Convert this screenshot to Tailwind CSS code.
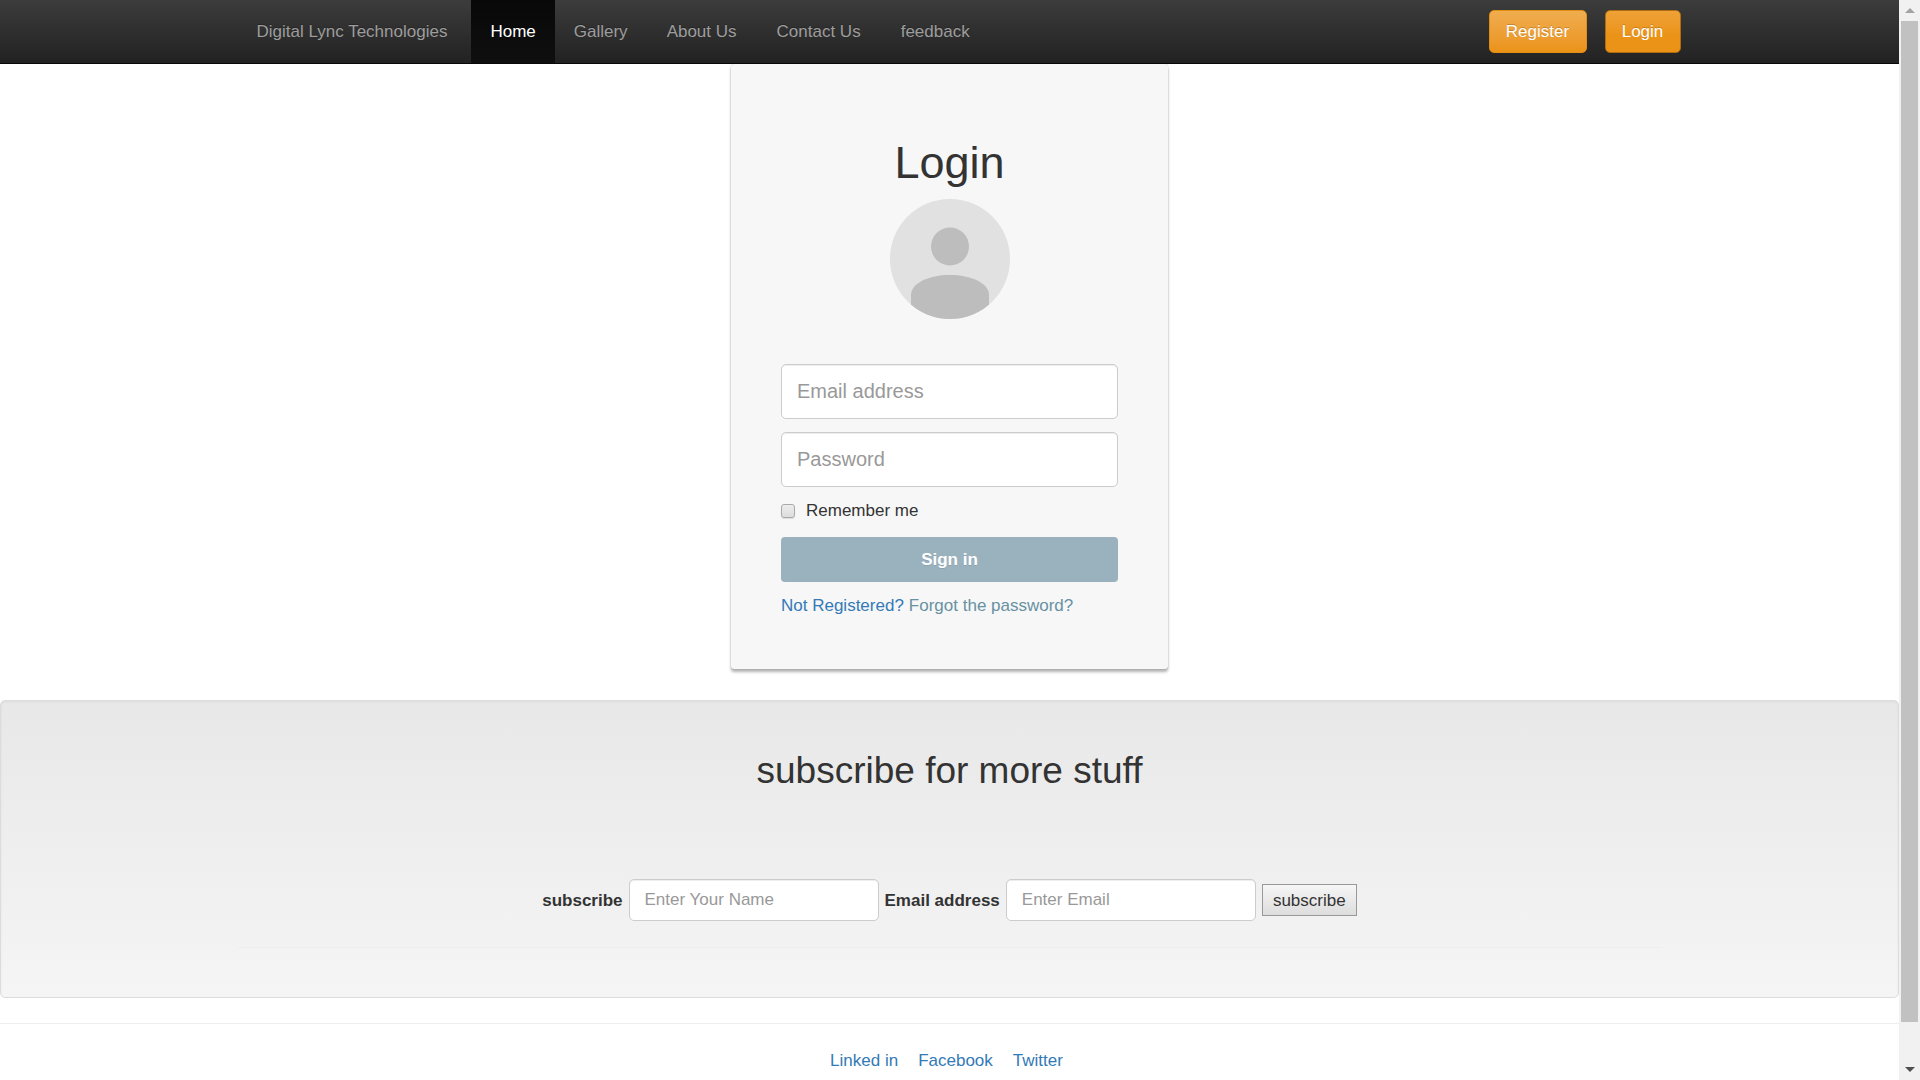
<!DOCTYPE html>
<html lang="en">
<head>
<meta charset="utf-8">
<meta name="viewport" content="width=device-width, initial-scale=1">
<title>Login - Digital Lync Technologies</title>
<script src="https://cdn.jsdelivr.net/npm/@tailwindcss/browser@4"></script>
</head>
<body class="flex min-h-screen bg-white font-['Liberation_Sans',Arial,sans-serif] text-[17px] leading-[25px] text-[#333333]">

  <div class="min-w-0 flex-1">
    <!-- Top navigation -->
    <header class="border-b border-[#080808] bg-linear-to-b from-[#3c3c3c] to-[#222222]">
      <nav class="mx-auto flex h-[63px] max-w-[1462px] items-center pl-[18px] text-[#9d9d9d] text-shadow-[0_-1px_0_rgb(0_0_0/0.25)]">
        <a href="#" class="pr-6 pl-5">Digital Lync Technologies</a>
        <a href="#" class="flex h-full items-center bg-linear-to-b from-[#080808] to-[#0f0f0f] px-[19px] text-white">Home</a>
        <a href="#" class="px-[19px]">Gallery</a>
        <a href="#" class="px-5">About Us</a>
        <a href="#" class="px-5">Contact Us</a>
        <a href="#" class="px-5">feedback</a>
        <div class="ml-auto flex gap-[18px] text-white">
          <button type="button" class="h-[43px] w-[98px] rounded-[5px] border border-[#e38d13] bg-linear-to-b from-[#f0ad4e] to-[#eb9316] text-shadow-[0_-1px_0_rgb(0_0_0/0.2)]">Register</button>
          <button type="button" class="h-[43px] w-[76px] rounded-[5px] border border-[#b06d0f] bg-linear-to-b from-[#eea236] to-[#eb9316] to-60% text-shadow-[0_-1px_0_rgb(0_0_0/0.2)]">Login</button>
        </div>
      </nav>
    </header>

    <main>
      <!-- Login card -->
      <section class="mx-auto flex w-full max-w-[437px] flex-col rounded-[3px] bg-[#f7f7f7] px-[50px] pt-[74px] pb-[51px] shadow-[0_3px_3px_rgb(0_0_0/0.3),0_0_1px_rgb(0_0_0/0.3)]">
        <h1 class="text-center text-[45px] leading-[50px]">Login</h1>
        <svg class="mx-auto mt-[11px] size-[120px]" viewBox="0 0 120 120" role="img" aria-label="Profile picture">
          <defs><clipPath id="disc"><circle cx="60" cy="60" r="60"/></clipPath></defs>
          <g clip-path="url(#disc)">
            <rect width="120" height="120" fill="#e1e1e1"/>
            <circle cx="60" cy="47.500" r="19" fill="#bdbdbd"/>
            <path d="M21 120V96C21 84 39 76 60 76S99 84 99 96V120Z" fill="#bdbdbd"/>
          </g>
        </svg>
        <form class="mt-[45px] flex flex-col">
          <input type="email" aria-label="Email address" placeholder="Email address" class="h-[55px] rounded-[5px] border border-[#cccccc] bg-white px-[15px] text-[20px] shadow-[inset_0_1px_1px_rgb(0_0_0/0.075)] placeholder:text-[#999999]">
          <input type="password" aria-label="Password" placeholder="Password" class="mt-[13px] h-[55px] rounded-[5px] border border-[#cccccc] bg-white px-[15px] text-[20px] shadow-[inset_0_1px_1px_rgb(0_0_0/0.075)] placeholder:text-[#999999]">
          <label class="mt-[11px] flex items-center gap-[11px]">
            <input type="checkbox" class="size-[14px] appearance-none rounded-[3px] border border-[#a9a9a9] bg-linear-to-b from-[#ededed] to-[#dcdcdc] shadow-[0_1px_1px_rgb(0_0_0/0.1)] checked:bg-[#428bca]">
            Remember me
          </label>
          <button type="submit" class="mt-[14px] h-[45px] rounded-[4px] bg-[#9ab2be] font-bold text-white text-shadow-[0_1px_rgb(0_0_0/0.1)]">Sign in</button>
        </form>
        <p class="mt-[11px] flex gap-[5px] whitespace-nowrap">
          <a href="#" class="text-[#337ab7]">Not Registered?</a>
          <a href="#" class="text-[#6891a2]">Forgot the password?</a>
        </p>
      </section>

      <!-- Newsletter -->
      <section class="mt-[31px] rounded-[5px] border border-[#dcdcdc] bg-linear-to-b from-[#e8e8e8] to-[#f5f5f5] px-[19px] pt-[49px] pb-[49px] shadow-[inset_0_1px_3px_rgb(0_0_0/0.05),0_1px_0_rgb(255_255_255/0.1)]">
        <div class="mx-auto max-w-[1424px]">
          <h2 class="text-center text-[37px] leading-[42px]">subscribe for more stuff</h2>
          <form class="mt-[87px] flex items-center justify-center gap-[6px]">
            <label for="name" class="font-bold">subscribe</label>
            <input id="name" type="text" placeholder="Enter Your Name" class="h-[42px] w-[250px] rounded-[5px] border border-[#cccccc] bg-white px-[15px] shadow-[inset_0_1px_1px_rgb(0_0_0/0.075)] placeholder:text-[#999999]">
            <label for="email" class="font-bold">Email address</label>
            <input id="email" type="email" placeholder="Enter Email" class="h-[42px] w-[250px] rounded-[5px] border border-[#cccccc] bg-white px-[15px] shadow-[inset_0_1px_1px_rgb(0_0_0/0.075)] placeholder:text-[#999999]">
            <button type="submit" class="h-[32px] w-[95px] border border-[#999999] bg-linear-to-b from-[#f6f6f6] to-[#dddddd]">subscribe</button>
          </form>
          <hr class="mt-[26px] border-[#eeeeee]">
        </div>
      </section>
    </main>

    <hr class="mt-[25px] border-[#eeeeee]">
    <footer class="flex justify-center gap-5 pt-6 pr-1.5 text-[#337ab7]">
      <a href="#">Linked in</a>
      <a href="#">Facebook</a>
      <a href="#">Twitter</a>
    </footer>
  </div>

  <!-- Scroll track -->
  <div class="sticky top-0 flex h-screen w-[21px] flex-col items-center bg-[#f1f1f1]" aria-hidden="true">
    <div class="flex h-[21px] items-center"><svg class="h-[5px] w-[10px]" viewBox="0 0 10 5"><path d="M0 5L5 0L10 5Z" fill="#a3a3a3"/></svg></div>
    <div class="flex w-full flex-1 flex-col px-0.5 pb-[37px]"><div class="flex-1 bg-[#c1c1c1]"></div></div>
    <div class="flex h-[21px] items-center"><svg class="h-[5px] w-[10px]" viewBox="0 0 10 5"><path d="M0 0H10L5 5Z" fill="#505050"/></svg></div>
  </div>
</body>
</html>
